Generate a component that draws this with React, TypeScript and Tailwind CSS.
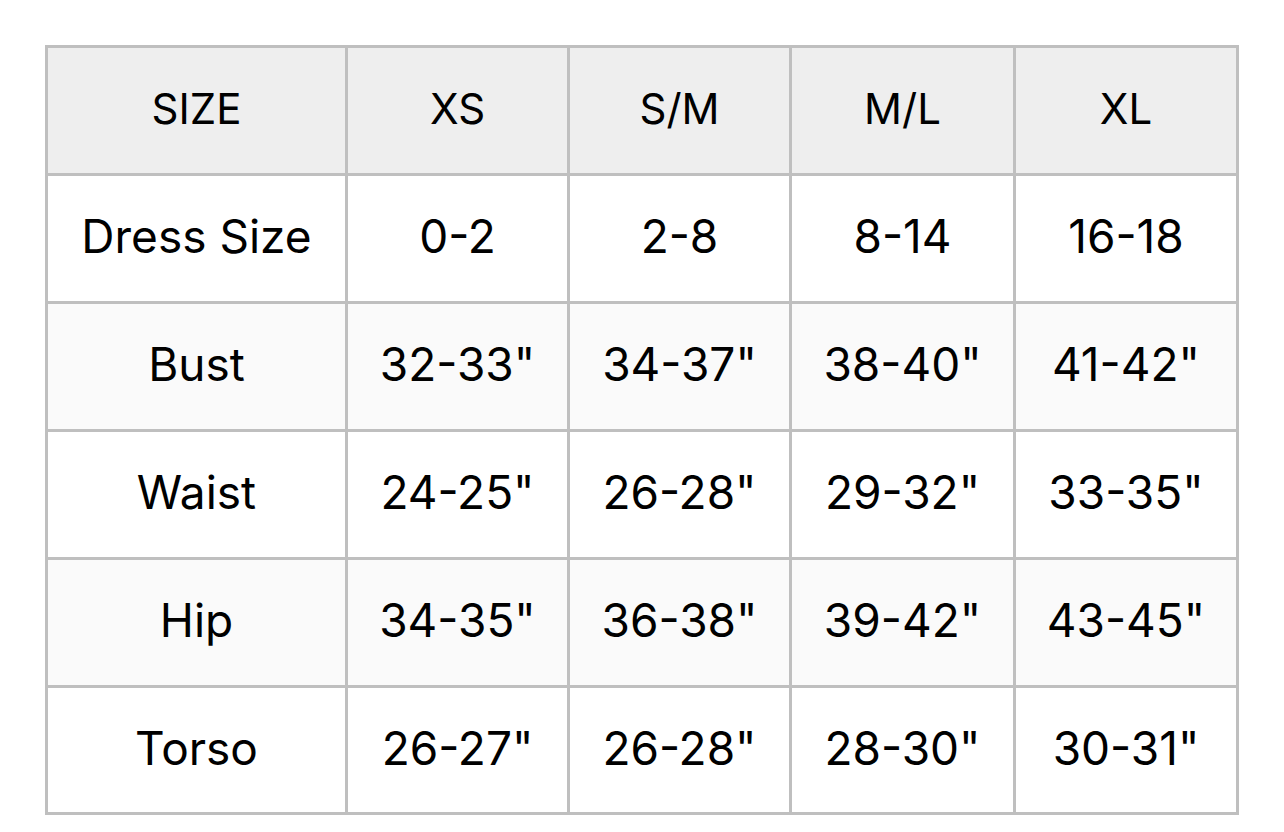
const header = ["SIZE", "XS", "S/M", "M/L", "XL"];

const rows = [
  ["Dress Size", "0-2", "2-8", "8-14", "16-18"],
  ["Bust", '32-33"', '34-37"', '38-40"', '41-42"'],
  ["Waist", '24-25"', '26-28"', '29-32"', '33-35"'],
  ["Hip", '34-35"', '36-38"', '39-42"', '43-45"'],
  ["Torso", '26-27"', '26-28"', '28-30"', '30-31"'],
];

export default function App() {
  return (
    <div className="w-[1284px] h-[832px] bg-white pl-[45px] pt-[45px] font-['Inter',sans-serif] text-black">
      <div className="grid grid-cols-[297px_219px_219px_221px_220px] grid-rows-[125px_125px_125px_125px_125px_124px] gap-[3px] p-[3px] bg-[#bfbfbf] w-[1194px]">
        {header.map((h) => (
          <div key={h} className="bg-[#eeeeee] flex items-center justify-center pb-[4px] text-[42px]">
            {h}
          </div>
        ))}
        {rows.map((row, i) =>
          row.map((cell, j) => (
            <div
              key={`${i}-${j}`}
              className={`flex items-center justify-center pb-[4px] text-[46px] ${i % 2 === 1 ? "bg-[#fafafa]" : "bg-white"}`}
            >
              {cell}
            </div>
          ))
        )}
      </div>
    </div>
  );
}
